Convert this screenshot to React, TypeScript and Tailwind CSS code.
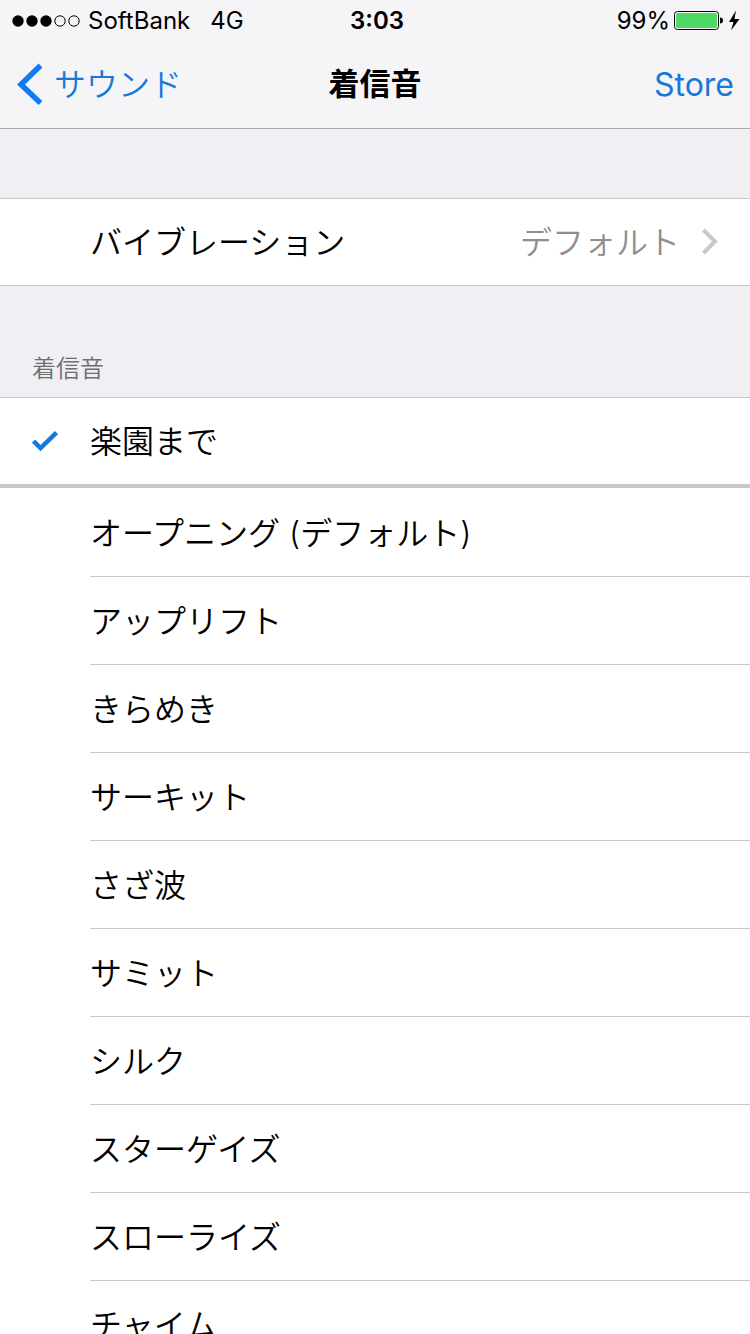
import React, { useState } from 'react';

const CUSTOM_TONES = ['楽園まで'];

const BUILT_IN_TONES = [
  'オープニング (デフォルト)',
  'アップリフト',
  'きらめき',
  'サーキット',
  'さざ波',
  'サミット',
  'シルク',
  'スターゲイズ',
  'スローライズ',
  'チャイム',
];

const StatusBar: React.FC = () => (
  <div className="grid h-[41px] grid-cols-3 items-center pl-3 pr-2 text-2xl text-black">
    <div className="flex items-center gap-2 whitespace-nowrap">
      <svg width="68" height="12" viewBox="0 0 68 12" role="img" aria-label="Signal: 3 of 5">
        <circle cx="6" cy="6" r="5.7" />
        <circle cx="20" cy="6" r="5.7" />
        <circle cx="34" cy="6" r="5.7" />
        <circle cx="48" cy="6" r="5.2" fill="none" stroke="currentColor" />
        <circle cx="62" cy="6" r="5.2" fill="none" stroke="currentColor" />
      </svg>
      <span>SoftBank</span>
      <span className="ml-3">4G</span>
    </div>
    <time className="text-center font-semibold">3:03</time>
    <div className="flex items-center justify-end gap-1">
      <span>99%</span>
      <svg width="68" height="24" viewBox="0 0 68 24" role="img" aria-label="Charging">
        <rect x="0.5" y="2.5" width="44" height="18" rx="3" fill="#fff" stroke="#000" />
        <rect x="2" y="4" width="41" height="15" rx="1.5" fill="#4cd964" />
        <path d="M46 8.5c2 0 3 1.3 3 3s-1 3-3 3z" />
        <path d="M62 1.5 55 13h4.5L57 21.5 65.5 10h-5z" />
      </svg>
    </div>
  </div>
);

interface ToneRowProps {
  name: string;
  selected: boolean;
  divider: boolean;
  onSelect: (name: string) => void;
}

const ToneRow: React.FC<ToneRowProps> = ({ name, selected, divider, onSelect }) => (
  <label className="flex cursor-pointer">
    <input
      type="radio"
      name="ringtone"
      value={name}
      checked={selected}
      onChange={() => onSelect(name)}
      className="sr-only"
    />
    <span className="flex w-[90px] shrink-0 items-center pl-8 text-[#157ae0]">
      {selected && (
        <svg width="26" height="22" viewBox="0 0 26 22" fill="none" stroke="currentColor" strokeWidth="4.5" aria-hidden="true">
          <path d="M1.5 11 8.5 18 24.5 2.5" />
        </svg>
      )}
    </span>
    <span
      className={
        divider
          ? 'flex h-[88px] flex-1 items-center border-b border-[#c8c7cc] pt-0.5'
          : 'flex h-[86px] flex-1 items-center pt-0.5'
      }
    >
      {name}
    </span>
  </label>
);

export default function App() {
  const [tone, setTone] = useState('楽園まで');

  return (
    <div className="flex h-screen flex-col overflow-hidden bg-[#efeff4] font-['Inter','Noto_Sans_CJK_JP',sans-serif] text-black">
      <header className="shrink-0 border-b border-[#a7a7ac] bg-[#f5f5f8]">
        <StatusBar />
        <nav className="grid h-[87px] grid-cols-3 items-center px-4 text-[32px] text-[#1a78d6]">
          <a href="#sounds" className="flex items-center gap-3 whitespace-nowrap font-[350]">
            <svg width="26" height="44" viewBox="0 0 26 44" fill="none" stroke="#127bf0" strokeWidth="5.5" aria-hidden="true">
              <path d="M24.5 2.5 5 21.5 24.5 40" />
            </svg>
            サウンド
          </a>
          <h1 className="text-center text-[31px] font-bold text-black">着信音</h1>
          <a href="#store" className="justify-self-end">
            Store
          </a>
        </nav>
      </header>

      <main className="min-h-0 flex-1 overflow-y-auto pt-[69px] text-[32px] font-[350] [scrollbar-width:none]">
        <button
          type="button"
          className="flex h-[88px] w-full items-center border-y border-[#c8c7cc] bg-white pl-[90px] pr-8 text-left"
        >
          <span className="flex-1 pt-0.5">バイブレーション</span>
          <span className="pt-0.5 text-[#8e8e93]">デフォルト</span>
          <svg width="18" height="28" viewBox="0 0 18 28" fill="none" stroke="#c7c7cc" strokeWidth="4" className="ml-5" aria-hidden="true">
            <path d="M3.5 2 15 13.5 3.5 25" />
          </svg>
        </button>

        <section aria-labelledby="tones-heading">
          <h2 id="tones-heading" className="flex h-[111px] items-end px-8 pb-3 text-2xl font-[350] text-[#6d6d72]">
            着信音
          </h2>
          <div className="border-y border-b-4 border-[#c8c7cc] bg-white">
            {CUSTOM_TONES.map((name) => (
              <ToneRow key={name} name={name} selected={tone === name} divider={false} onSelect={setTone} />
            ))}
          </div>
          <div className="bg-white pt-px">
            {BUILT_IN_TONES.map((name) => (
              <ToneRow key={name} name={name} selected={tone === name} divider onSelect={setTone} />
            ))}
          </div>
        </section>
      </main>
    </div>
  );
}
